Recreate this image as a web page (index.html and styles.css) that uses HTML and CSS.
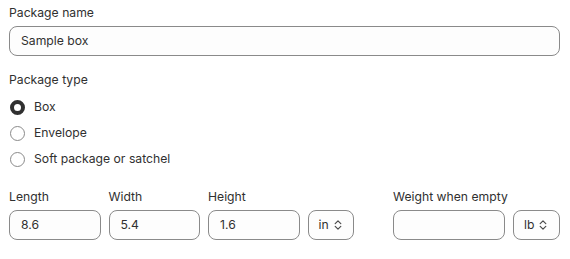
FILE: index.html
```html
<!DOCTYPE html>
<html>
<head>
<meta charset="utf-8">
<link rel="stylesheet" href="styles.css">
</head>
<body>
<div class="form">
  <div class="field">
    <div class="label">Package name</div>
    <div class="input full">Sample box</div>
  </div>

  <div class="field type">
    <div class="label">Package type</div>
    <div class="radios">
      <div class="radio-row"><span class="radio checked"></span><span>Box</span></div>
      <div class="radio-row"><span class="radio"></span><span>Envelope</span></div>
      <div class="radio-row"><span class="radio"></span><span>Soft package or satchel</span></div>
    </div>
  </div>

  <div class="dims">
    <div class="group">
      <div class="dim">
        <div class="label">Length</div>
        <div class="input">8.6</div>
      </div>
      <div class="dim">
        <div class="label">Width</div>
        <div class="input">5.4</div>
      </div>
      <div class="dim">
        <div class="label">Height</div>
        <div class="input">1.6</div>
      </div>
      <div class="dim unit-in">
        <div class="label">&nbsp;</div>
        <div class="input select"><span>in</span>
          <svg class="chev" width="10" height="12" viewBox="0 0 10 12"><path d="M2.2 4.6 5 1.8l2.8 2.8M2.2 7.4 5 10.2l2.8-2.8" fill="none" stroke="#4a4a4a" stroke-width="1.2" stroke-linecap="round" stroke-linejoin="round"/></svg>
        </div>
      </div>
    </div>
    <div class="group weight">
      <div class="dim wt">
        <div class="label">Weight when empty</div>
        <div class="input"></div>
      </div>
      <div class="dim unit-lb">
        <div class="label">&nbsp;</div>
        <div class="input select"><span>lb</span>
          <svg class="chev" width="10" height="12" viewBox="0 0 10 12"><path d="M2.2 4.6 5 1.8l2.8 2.8M2.2 7.4 5 10.2l2.8-2.8" fill="none" stroke="#4a4a4a" stroke-width="1.2" stroke-linecap="round" stroke-linejoin="round"/></svg>
        </div>
      </div>
    </div>
  </div>
</div>
</body>
</html>
```

FILE: styles.css
```css
html, body {
  margin: 0;
  padding: 0;
  background: #ffffff;
}
body {
  font-family: Inter, "Noto Sans", "Liberation Sans", sans-serif;
  font-size: 12.2px;
  line-height: 20px;
  color: #303030;
}
.form {
  padding: 3px 10px 0 9px;
}
.label {
  height: 20px;
  margin-bottom: 3px;
  white-space: nowrap;
}
.input {
  box-sizing: border-box;
  height: 30px;
  border: 1px solid #8a8a8a;
  border-radius: 8px;
  background: #fdfdfd;
  padding: 0 11px;
  display: flex;
  align-items: center;
}
.type {
  margin-top: 14px;
}
.type .label {
  margin-bottom: 4px;
}
.radio-row {
  height: 26px;
  display: flex;
  align-items: center;
  gap: 9px;
}
.radio {
  box-sizing: border-box;
  width: 15px;
  height: 15px;
  border-radius: 50%;
  border: 1px solid #8a8a8a;
  background: #fff;
  margin-left: 1px;
}
.radio.checked {
  border: 4px solid #303030;
}
.dims {
  margin-top: 15px;
  display: flex;
  justify-content: space-between;
}
.dims .label {
  margin-bottom: 3px;
}
.group {
  display: flex;
  gap: 8px;
}
.dim {
  width: 91.5px;
}
.unit-in {
  width: 46px;
}
.wt {
  width: 112px;
}
.unit-lb {
  width: 47px;
}
.select {
  padding: 0 0 0 10px;
  gap: 4px;
}
.chev {
  display: block;
}
```
